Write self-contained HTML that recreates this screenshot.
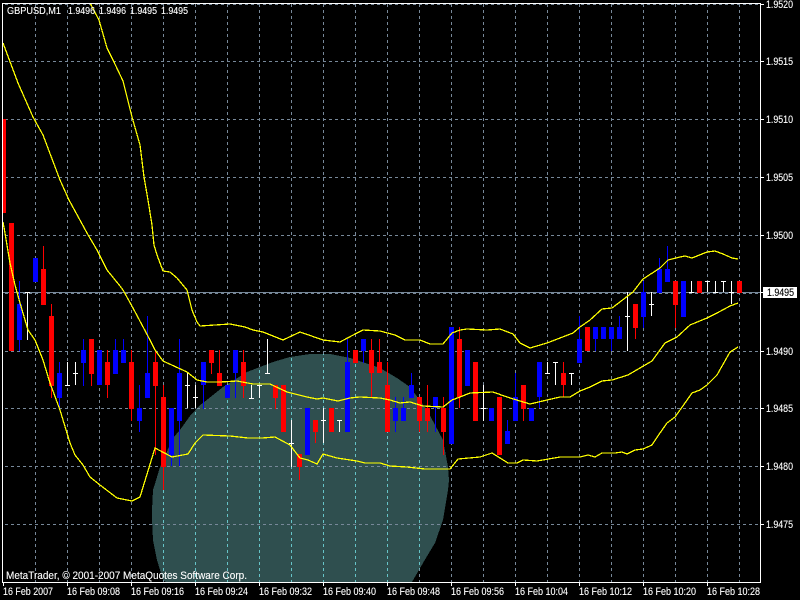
<!DOCTYPE html>
<html>
<head>
<meta charset="utf-8">
<style>
html,body{margin:0;padding:0;background:#000;width:800px;height:600px;overflow:hidden}
svg{display:block}
text{font-family:"Liberation Sans",sans-serif;fill:#fff;font-size:11px;stroke:#fff;stroke-width:.12px}
</style>
</head>
<body>
<svg width="800" height="600" viewBox="0 0 800 600" xmlns="http://www.w3.org/2000/svg">
<defs>
<clipPath id="ch"><rect x="3" y="4" width="757" height="578"/></clipPath>
<clipPath id="el"><polygon points="152,510 153,490 154,487 160,467 173,438 180,430 190,416 200,405 203,403 223,387 247,372 273,362 290,357 310,354 330,354 350,358 380,368 397,378 410,387 427,410 443,440 448,467 449,480 448,490 443,520 435,543 423,563 412,582 166,582 163,580 157,560 153,540 152,520"/></clipPath>
</defs>
<rect width="800" height="600" fill="#000"/>
<polygon fill="#2f4f4f" shape-rendering="crispEdges" points="152,510 153,490 154,487 160,467 173,438 180,430 190,416 200,405 203,403 223,387 247,372 273,362 290,357 310,354 330,354 350,358 380,368 397,378 410,387 427,410 443,440 448,467 449,480 448,490 443,520 435,543 423,563 412,582 166,582 163,580 157,560 153,540 152,520"/>

<!-- grid -->
<g stroke="#778899" stroke-width="1" stroke-dasharray="3 3" shape-rendering="crispEdges" fill="none">
<path d="M5 4.500H760M5 61.500H760M5 119.500H760M5 177.500H760M5 235.500H760M5 293.500H760M5 351.500H760M5 408.500H760M5 466.500H760M5 524.500H760"/>
<path d="M35.500 4V582M67.500 4V582M99.500 4V582M131.500 4V582M163.500 4V582M195.500 4V582M227.500 4V582M259.500 4V582M291.500 4V582M323.500 4V582M355.500 4V582M387.500 4V582M419.500 4V582M451.500 4V582M483.500 4V582M515.500 4V582M547.500 4V582M579.500 4V582M611.500 4V582M643.500 4V582M675.500 4V582M707.500 4V582M739.500 4V582"/>
</g>
<g clip-path="url(#el)">
<path stroke="#66c4c8" stroke-width="1" stroke-dasharray="3 3" shape-rendering="crispEdges" fill="none" d="M163.500 4V582M195.500 4V582M227.500 4V582M259.500 4V582M291.500 4V582M323.500 4V582M355.500 4V582M387.500 4V582M419.500 4V582"/>
</g>

<!-- current price line -->
<rect x="3" y="292" width="757" height="1" fill="#778899"/>

<!-- red candles -->
<path fill="#ff0000" shape-rendering="crispEdges" d="
M3 119h3V213h-3z
M9 223h5V351h-5z
M41 269h5V305h-5z M43 246h1V269h-1z
M49 316h5V386h-5z M51 304h1V398h-1z
M89 339h5V374h-5z M91 374h1V386h-1z
M105 362h5V385h-5z M107 350h1V398h-1z
M129 362h5V409h-5z M131 350h1V421h-1z
M153 362h5V386h-5z M155 350h1V455h-1z
M161 397h5V467h-5z M163 385h1V490h-1z
M209 350h5V363h-5z M211 363h1V374h-1z
M217 373h5V386h-5z M219 350h1V373h-1z
M241 362h5V386h-5z M243 350h1V398h-1z
M273 385h5V398h-5z M275 398h1V409h-1z
M281 385h5V432h-5z
M297 454h5V467h-5z M299 467h1V480h-1z
M313 420h5V432h-5z M315 432h1V443h-1z
M329 408h5V432h-5z
M353 350h5V363h-5z
M369 350h5V373h-5z M371 339h1V397h-1z
M377 362h5V373h-5z M379 339h1V362h-1z
M385 385h5V432h-5z M387 362h1V385h-1z
M417 397h5V421h-5z M419 421h1V432h-1z
M425 408h5V421h-5z M427 385h1V432h-1z
M441 408h5V432h-5z M443 397h1V455h-1z
M457 339h5V397h-5z M459 327h1V408h-1z
M473 362h5V421h-5z
M497 397h5V455h-5z
M521 385h5V409h-5z M523 409h1V421h-1z
M561 373h5V385h-5z M563 362h1V397h-1z
M585 327h5V351h-5z
M633 304h5V328h-5z M635 328h1V339h-1z
M673 281h5V305h-5z M675 305h1V328h-1z
M697 281h5V293h-5z
M737 281h5V293h-5z"/>

<!-- blue candles -->
<path fill="#0000ff" shape-rendering="crispEdges" d="
M17 304h5V340h-5z M19 281h1V351h-1z
M33 258h5V282h-5z
M57 373h5V398h-5z M59 362h1V408h-1z
M81 350h5V363h-5z M83 339h1V386h-1z
M97 350h5V385h-5z
M113 350h5V374h-5z M115 339h1V350h-1z
M121 350h5V363h-5z M123 339h1V350h-1z
M137 408h5V421h-5z M139 385h1V432h-1z
M145 373h5V398h-5z M147 316h1V373h-1z
M169 408h5V455h-5z M171 455h1V466h-1z
M177 373h5V421h-5z M179 339h1V466h-1z
M201 362h5V385h-5z M203 385h1V409h-1z
M225 385h5V398h-5z
M233 350h5V373h-5z M235 373h1V398h-1z
M305 408h5V455h-5z
M345 362h5V432h-5z M347 339h1V362h-1z
M361 339h5V351h-5z M363 351h1V363h-1z
M393 408h5V421h-5z M395 397h1V432h-1z
M401 408h5V421h-5z M403 397h1V408h-1z
M409 385h5V398h-5z M411 373h1V385h-1z
M433 397h5V408h-5z M435 408h1V432h-1z
M449 327h5V444h-5z
M465 350h5V386h-5z
M489 408h5V421h-5z
M505 431h5V444h-5z M507 420h1V431h-1z
M513 397h5V421h-5z M515 373h1V397h-1z
M529 408h5V421h-5z
M537 362h5V397h-5z M539 397h1V408h-1z
M577 339h5V363h-5z M579 316h1V339h-1z
M593 327h5V339h-5z M595 339h1V351h-1z
M601 327h5V339h-5z
M609 327h5V339h-5z M611 339h1V351h-1z
M617 327h5V339h-5z M619 316h1V327h-1z
M641 292h5V317h-5z M643 281h1V328h-1z
M657 269h5V293h-5z M659 258h1V269h-1z
M665 269h5V282h-5z M667 246h1V269h-1z
M681 281h5V317h-5z"/>

<!-- doji -->
<path fill="#ffffff" shape-rendering="crispEdges" d="
M27 293h1V340h-1z M25 292h5v1h-5z
M67 362h1V385h-1z M65 385h5v1h-5z
M75 362h1V385h-1z M73 373h5v1h-5z
M187 373h1V408h-1z M185 385h5v1h-5z
M195 385h1V408h-1z M193 397h5v1h-5z
M251 385h1V398h-1z M249 398h5v1h-5z
M259 385h1V398h-1z M257 385h5v1h-5z
M267 339h1V373h-1z M265 373h5v1h-5z
M291 420h1V467h-1z M289 443h5v1h-5z
M323 408h1V443h-1z M321 420h5v1h-5z
M339 420h1V432h-1z M337 420h5v1h-5z
M483 385h1V421h-1z M481 408h5v1h-5z
M547 362h1V373h-1z M545 373h5v1h-5z
M555 362h1V385h-1z M553 362h5v1h-5z
M571 373h1V385h-1z M569 373h5v1h-5z
M627 292h1V351h-1z M625 316h5v1h-5z
M651 292h1V316h-1z M649 304h5v1h-5z
M691 281h1V292h-1z M689 292h5v1h-5z
M707 281h1V292h-1z M705 281h5v1h-5z
M715 281h1V292h-1z M713 292h5v1h-5z
M723 281h1V292h-1z M721 281h5v1h-5z
M731 281h1V304h-1z M729 292h5v1h-5z"/>

<!-- bands -->
<g fill="none" stroke="#ffff00" stroke-width="1.25" shape-rendering="crispEdges" clip-path="url(#ch)">
<polyline points="90,3 99,20 107,48 113,60 123,81 132,117 140,145 144,177 148,200 152,225 154,245 157,255 163,271 170,272 177,278 187,290 192,310 197,322 200,326 215,325 230,324 245,327 253,330 263,332 283,340 300,332 323,340 340,342 357,333 363,330 380,331 395,335 405,340 420,340 430,344 443,344 452,333 460,330 467,329 487,330 500,329 513,334 520,343 530,348 547,343 560,338 573,333 580,327 590,320 602,309 612,308 633,292 643,279 660,268 668,260 680,257 685,256 692,258 707,252 715,251 723,254 732,258 738,259"/>
<polyline points="3,43 18,83 33,117 43,135 60,180 69,200 87,233 97,250 107,270 120,286 123,290 133,308 150,340 155,350 163,361 187,372 197,380 207,382 220,382 237,381 253,384 270,384 287,392 307,397 317,399 323,398 338,401 350,398 360,397 380,398 390,400 400,403 410,402 423,406 443,407 452,400 460,397 470,393 493,392 507,397 520,401 530,404 547,400 560,397 570,397 580,391 590,387 602,381 612,380 628,375 640,368 652,361 665,343 677,337 690,325 707,318 717,313 730,306 738,303"/>
<polyline points="3,222 5,233 10,263 15,285 20,303 28,330 35,340 43,360 50,383 60,410 70,443 75,455 83,465 90,477 100,485 117,498 132,501 140,497 155,448 172,457 188,454 195,443 203,435 230,436 248,438 262,438 275,437 290,445 300,458 308,460 317,464 323,454 337,458 357,461 365,463 380,463 390,466 407,467 425,469 450,469 458,459 480,457 492,453 508,463 517,463 523,460 537,461 560,457 580,457 588,455 595,457 602,453 615,453 622,452 627,454 635,450 643,449 652,445 660,433 667,423 675,417 685,403 692,393 700,390 707,385 717,375 730,352 738,347"/>
</g>

<!-- frame -->
<g fill="#ffffff" shape-rendering="crispEdges">
<rect x="2" y="3" width="759" height="1"/>
<rect x="2" y="3" width="1" height="580"/>
<rect x="760" y="3" width="1" height="580"/>
<rect x="2" y="582" width="759" height="1"/>
<path d="M761 4h3v1h-3zM761 61h3v1h-3zM761 119h3v1h-3zM761 177h3v1h-3zM761 235h3v1h-3zM761 351h3v1h-3zM761 408h3v1h-3zM761 466h3v1h-3zM761 524h3v1h-3z"/>
<path d="M3 583h1v3h-1zM67 583h1v3h-1zM131 583h1v3h-1zM195 583h1v3h-1zM259 583h1v3h-1zM323 583h1v3h-1zM387 583h1v3h-1zM451 583h1v3h-1zM515 583h1v3h-1zM579 583h1v3h-1zM643 583h1v3h-1zM707 583h1v3h-1z"/>
</g>

<!-- header text -->
<text x="7" y="14" style="font-size:10px" textLength="54" lengthAdjust="spacingAndGlyphs">GBPUSD,M1</text>
<text x="68" y="14" style="font-size:10px" textLength="27" lengthAdjust="spacingAndGlyphs">1.9496</text>
<text x="99" y="14" style="font-size:10px" textLength="27" lengthAdjust="spacingAndGlyphs">1.9496</text>
<text x="130" y="14" style="font-size:10px" textLength="27" lengthAdjust="spacingAndGlyphs">1.9495</text>
<text x="161" y="14" style="font-size:10px" textLength="27" lengthAdjust="spacingAndGlyphs">1.9495</text>

<text x="6" y="579" textLength="241" lengthAdjust="spacingAndGlyphs">MetaTrader, © 2001-2007 MetaQuotes Software Corp.</text>

<!-- price scale -->
<g>
<text x="766" y="8" textLength="27" lengthAdjust="spacingAndGlyphs">1.9520</text>
<text x="766" y="65" textLength="27" lengthAdjust="spacingAndGlyphs">1.9515</text>
<text x="766" y="123" textLength="27" lengthAdjust="spacingAndGlyphs">1.9510</text>
<text x="766" y="181" textLength="27" lengthAdjust="spacingAndGlyphs">1.9505</text>
<text x="766" y="239" textLength="27" lengthAdjust="spacingAndGlyphs">1.9500</text>
<text x="766" y="355" textLength="27" lengthAdjust="spacingAndGlyphs">1.9490</text>
<text x="766" y="412" textLength="27" lengthAdjust="spacingAndGlyphs">1.9485</text>
<text x="766" y="470" textLength="27" lengthAdjust="spacingAndGlyphs">1.9480</text>
<text x="766" y="528" textLength="27" lengthAdjust="spacingAndGlyphs">1.9475</text>
</g>
<rect x="763" y="287" width="34" height="11" fill="#ffffff" shape-rendering="crispEdges"/>
<rect x="760" y="292" width="3" height="1" fill="#ffffff" shape-rendering="crispEdges"/>
<text x="767" y="296" style="fill:#000;stroke:#000" textLength="27" lengthAdjust="spacingAndGlyphs">1.9495</text>

<!-- time scale -->
<g>
<text x="3" y="595" textLength="50" lengthAdjust="spacingAndGlyphs">16 Feb 2007</text>
<text x="67" y="595" textLength="53" lengthAdjust="spacingAndGlyphs">16 Feb 09:08</text>
<text x="131" y="595" textLength="53" lengthAdjust="spacingAndGlyphs">16 Feb 09:16</text>
<text x="195" y="595" textLength="53" lengthAdjust="spacingAndGlyphs">16 Feb 09:24</text>
<text x="259" y="595" textLength="53" lengthAdjust="spacingAndGlyphs">16 Feb 09:32</text>
<text x="323" y="595" textLength="53" lengthAdjust="spacingAndGlyphs">16 Feb 09:40</text>
<text x="387" y="595" textLength="53" lengthAdjust="spacingAndGlyphs">16 Feb 09:48</text>
<text x="451" y="595" textLength="53" lengthAdjust="spacingAndGlyphs">16 Feb 09:56</text>
<text x="515" y="595" textLength="53" lengthAdjust="spacingAndGlyphs">16 Feb 10:04</text>
<text x="579" y="595" textLength="53" lengthAdjust="spacingAndGlyphs">16 Feb 10:12</text>
<text x="643" y="595" textLength="53" lengthAdjust="spacingAndGlyphs">16 Feb 10:20</text>
<text x="707" y="595" textLength="53" lengthAdjust="spacingAndGlyphs">16 Feb 10:28</text>
</g>
</svg>
</body>
</html>
